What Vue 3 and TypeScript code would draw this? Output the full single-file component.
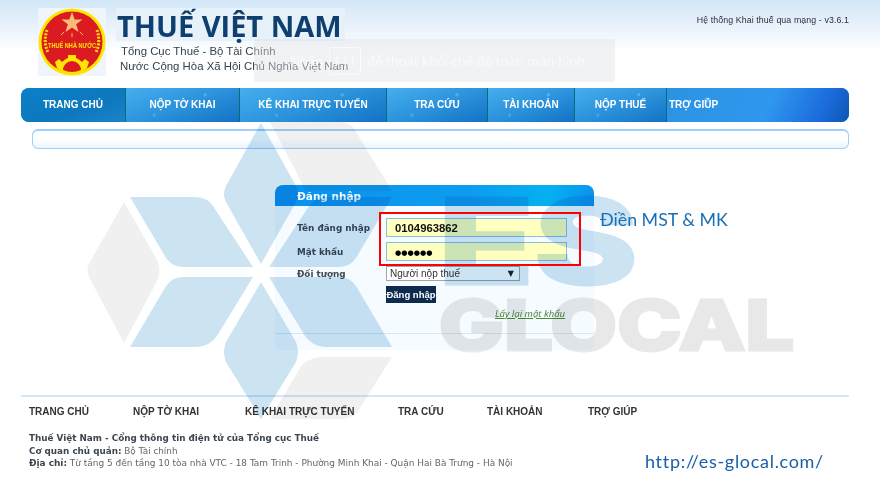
<template>
  <div class="page">
    <header class="top">
      <div class="brand">
        <div class="emblem">
          <svg width="68" height="68" viewBox="0 0 68 68">
            <circle cx="34" cy="34" r="33.5" fill="#ffe600" />
            <circle cx="34" cy="34" r="30.5" fill="#dc1a22" />
            <polygon
              points="34,4 36.7,11.5 44.5,11.5 38.2,16.3 40.5,24 34,19.4 27.5,24 29.8,16.3 23.5,11.5 31.3,11.5"
              fill="#f7bd78"
            />
            <path d="M34 25v4M26 24l-3 3M42 24l3 3" stroke="#f5c060" stroke-width="1" />
            <path
              d="M9 22 Q5 34 10 44"
              fill="none"
              stroke="#ffe600"
              stroke-width="3"
              stroke-dasharray="2 1.4"
            />
            <path
              d="M59 22 Q63 34 58 44"
              fill="none"
              stroke="#ffe600"
              stroke-width="3"
              stroke-dasharray="2 1.4"
            />
            <text x="34" y="40" class="emblem-text" textLength="48" lengthAdjust="spacingAndGlyphs">THUẾ NHÀ NƯỚC</text>
            <path
              d="M19 60 L17 54 L21 51 L24 54 Q27 51 30 50 L30 47 L38 47 L38 50 Q41 51 44 54 L47 51 L51 54 L49 60 Q42 66 34 66 Q26 66 19 60 Z"
              fill="#ffe600"
            />
            <path d="M25 62 A9 9 0 0 1 43 62 Q34 66 25 62 Z" fill="#dc1a22" />
          </svg>
        </div>
        <div class="brand-text">
          <h1>THUẾ VIỆT NAM</h1>
          <p class="sub1">Tổng Cục Thuế - Bộ Tài Chính</p>
          <p class="sub2">Nước Cộng Hòa Xã Hội Chủ Nghĩa Việt Nam</p>
        </div>
      </div>
      <div class="version">Hệ thống Khai thuế qua mạng - v3.6.1</div>
    </header>

    <nav class="menu">
      <a
        v-for="item in menu"
        :key="item.label"
        :style="{ width: item.w + 'px' }"
        :class="{ first: item.label === 'TRANG CHỦ' }"
      >{{ item.label }}</a>
      <a class="last">TRỢ GIÚP</a>
    </nav>
    <div class="notice"></div>

    <main class="login-wrap">
      <section class="login">
        <h2>Đăng nhập</h2>
        <div class="login-body">
          <div class="row r1">
            <label>Tên đăng nhập</label>
            <div class="field">0104963862</div>
          </div>
          <div class="row r2">
            <label>Mật khẩu</label>
            <div class="field dots">●●●●●●</div>
          </div>
          <div class="row r3">
            <label>Đối tượng</label>
            <div class="select">Người nộp thuế<span class="arrow">▼</span></div>
          </div>
          <button class="submit">Đăng nhập</button>
          <a class="forgot">Lấy lại mật khẩu</a>
          <div class="rule"></div>
        </div>
      </section>
    </main>

    <footer class="foot">
      <div class="foot-nav">
        <a v-for="f in footLinks" :key="f.label" :style="{ width: f.w + 'px' }">{{ f.label }}</a>
      </div>
      <p class="strong">Thuế Việt Nam - Cổng thông tin điện tử của Tổng cục Thuế</p>
      <p><b>Cơ quan chủ quản:</b> Bộ Tài chính</p>
      <p class="addr"><b>Địa chỉ:</b> Từ tầng 5 đến tầng 10 tòa nhà VTC - 18 Tam Trinh - Phường Minh Khai - Quận Hai Bà Trưng - Hà Nội</p>
    </footer>

    <!-- thanh bao F11 cua trinh duyet -->
    <div class="toast">
      <span>Nhấn</span><kbd>F11</kbd><span>để thoát khỏi chế độ toàn màn hình</span>
    </div>

    <!-- watermark phu len toan trang -->
    <svg class="mark" width="880" height="500" viewBox="0 0 880 500">
      <g fill="#cce3f2">
        <path d="M261 123 L226 186 Q222 194 226 202 L261 264 L296 202 Q300 194 296 186 Z" />
        <path d="M261 282 L226 342 Q222 352 226 362 L261 419 L296 362 Q300 352 296 342 Z" />
        <path d="M130 197 L197 197 Q208 198 213 206 L253 267 L184 267 Q172 267 166 258 Z" />
        <path d="M130 347 L197 347 Q210 346 217 336 L253 277 L184 277 Q172 277 166 286 Z" />
        <path d="M392 197 L325 197 Q314 198 309 206 L269 267 L338 267 Q350 267 356 258 Z" />
        <path d="M392 347 L325 347 Q312 346 305 336 L269 277 L338 277 Q350 277 356 286 Z" />
      </g>
      <g fill="#f0f0f0">
        <path d="M124 202 L90 262 Q85 270 90 279 L124 343 L156 283 Q163 270 156 258 Z" />
        <path d="M270 122 L340 122 Q350 122 355 130 L392 191 L306 191 Z" />
        <path d="M392 357 L322 357 Q306 358 300 368 L270 419 L340 419 Q352 419 358 411 Z" />
      </g>
      <text x="438" y="284" class="mark-es" textLength="200" lengthAdjust="spacingAndGlyphs">ES</text>
      <text x="439" y="350" class="mark-glocal" textLength="355" lengthAdjust="spacingAndGlyphs">GLOCAL</text>
    </svg>

    <div class="redbox"></div>
    <div class="note">Điền MST &amp; MK</div>
    <div class="url">http://es-glocal.com/</div>
  </div>
</template>

<script setup lang="ts">
const menu = [
  { label: 'TRANG CHỦ', w: 105 },
  { label: 'NỘP TỜ KHAI', w: 114 },
  { label: 'KÊ KHAI TRỰC TUYẾN', w: 147 },
  { label: 'TRA CỨU', w: 101 },
  { label: 'TÀI KHOẢN', w: 87 },
  { label: 'NỘP THUẾ', w: 92 }
]

const footLinks = [
  { label: 'TRANG CHỦ', w: 104 },
  { label: 'NỘP TỜ KHAI', w: 112 },
  { label: 'KÊ KHAI TRỰC TUYẾN', w: 153 },
  { label: 'TRA CỨU', w: 89 },
  { label: 'TÀI KHOẢN', w: 101 },
  { label: 'TRỢ GIÚP', w: 60 }
]
</script>

<style>
html,
body {
  margin: 0;
  background: #fff;
}
</style>

<style scoped>
.page {
  position: relative;
  width: 880px;
  height: 500px;
  overflow: hidden;
  font-family: 'DejaVu Sans', sans-serif;
  background: linear-gradient(#d2e6f7 0, #fff 52px);
}
.top {
  height: 88px;
  display: flex;
  justify-content: space-between;
  padding: 8px 31px 0 38px;
  box-sizing: border-box;
}
.brand {
  display: flex;
  gap: 10px;
}
.emblem {
  width: 68px;
  height: 68px;
  background: #eef6fc;
}
.emblem svg {
  display: block;
}
.emblem-text {
  font-family: 'Liberation Sans', sans-serif;
  font-size: 7px;
  font-weight: 700;
  fill: #ffe600;
  text-anchor: middle;
}
.brand-text h1 {
  margin: 0;
  width: 229px;
  height: 33px;
  font-family: 'Open Sans', sans-serif;
  font-size: 29px;
  line-height: 35px;
  font-weight: 700;
  color: #0e3f6e;
  white-space: nowrap;
  background: #e6f1fa;
  text-indent: 1px;
}
.brand-text p {
  margin: 0;
  font-family: 'Liberation Sans', sans-serif;
  font-size: 11.4px;
  line-height: 15px;
  color: #33424f;
  white-space: nowrap;
}
.sub1 {
  padding: 3px 0 0 5px;
}
.sub2 {
  padding-left: 4px;
}
.version {
  font-family: 'Liberation Sans', sans-serif;
  font-size: 8.8px;
  line-height: 24px;
  letter-spacing: 0.1px;
  color: #2a3038;
}
.menu {
  margin: 0 31px 0 21px;
  height: 34px;
  display: flex;
  border-radius: 8px;
  overflow: hidden;
  background: linear-gradient(135deg, #3aa5ea, #1678c9);
}
.menu a {
  box-sizing: border-box;
  height: 34px;
  line-height: 34px;
  text-align: center;
  font-family: 'Liberation Sans', sans-serif;
  font-size: 10px;
  font-weight: 700;
  color: #fff;
  white-space: nowrap;
  border-right: 1px solid #0d6a7a;
  background:
    radial-gradient(circle at 70% 20%, rgba(255, 255, 255, 0.18) 0 1.5px, transparent 2px),
    radial-gradient(circle at 25% 80%, rgba(255, 255, 255, 0.14) 0 1.5px, transparent 2px),
    linear-gradient(160deg, #45aeee 0%, #2c93dc 50%, #1272c4 100%);
}
.menu a.first {
  background: linear-gradient(160deg, #0a80c8, #0d78bd 60%, #1a84c8);
}
.menu a.last {
  flex: 1;
  border-right: 0;
  text-align: left;
  padding-left: 2px;
  background:
    radial-gradient(circle at 22% 35%, rgba(255, 255, 255, 0.3) 0 2px, transparent 3px),
    linear-gradient(115deg, #2a93e2 0%, #2f98ee 55%, #1a6adc 85%, #0f55b0 100%);
}
.notice {
  margin: 7px 31px 0 32px;
  height: 20px;
  box-sizing: border-box;
  border: 1px solid #9ed0fb;
  border-top-width: 2px;
  border-radius: 6px;
  background: linear-gradient(#fff 45%, #eaf5ff);
}
.login-wrap {
  display: flex;
  padding: 36px 0 0 275px;
}
.login {
  width: 319px;
}
.login h2 {
  margin: 0;
  height: 21px;
  padding-left: 22px;
  font-size: 10.5px;
  line-height: 22px;
  font-weight: 700;
  color: #f2f9ff;
  border-radius: 8px 8px 0 0;
  background: linear-gradient(100deg, #0a92ee 0%, #0d9cf0 60%, #05b0f0 85%, #0a92ee 100%);
}
.login-body {
  height: 144px;
  padding: 12px 0 0 22px;
  box-sizing: border-box;
  background: #f5fbff;
  border-radius: 0 0 6px 6px;
}
.row {
  display: flex;
  align-items: center;
}
.row label {
  width: 89px;
  font-size: 8.8px;
  font-weight: 700;
  color: #3f4a55;
  white-space: nowrap;
}
.r2 {
  margin-top: 5px;
}
.r3 {
  margin-top: 5px;
}
.field {
  width: 181px;
  height: 19px;
  box-sizing: border-box;
  border: 1px solid #86bfe8;
  background: #ffffc0;
  padding-left: 8px;
  font-family: 'Liberation Sans', sans-serif;
  font-size: 11.3px;
  font-weight: 700;
  line-height: 19px;
  color: #111;
}
.dots {
  font-family: 'DejaVu Sans', sans-serif;
  font-size: 7.2px;
  color: #000;
}
.select {
  position: relative;
  width: 134px;
  height: 15px;
  box-sizing: border-box;
  border: 1px solid #a0a6ac;
  background: #fff;
  padding-left: 3px;
  font-family: 'Liberation Sans', sans-serif;
  font-size: 10px;
  line-height: 14px;
  color: #333;
}
.arrow {
  position: absolute;
  right: 5px;
  top: 0;
  font-family: 'DejaVu Sans', sans-serif;
  font-size: 8px;
  color: #222;
}
.submit {
  display: block;
  margin: 5px 0 0 89px;
  width: 50px;
  height: 17px;
  padding: 0;
  border: 0;
  background: #0d2a4f;
  color: #fff;
  font-family: 'Liberation Sans', sans-serif;
  font-size: 9.5px;
  font-weight: 700;
  white-space: nowrap;
}
.forgot {
  display: block;
  margin: 4px 0 0 198px;
  font-family: 'Noto Sans', sans-serif;
  font-size: 9.5px;
  line-height: 13px;
  font-style: italic;
  text-decoration: underline;
  color: #4a8a3a;
  white-space: nowrap;
}
.rule {
  margin: 13px 0 0 -22px;
  height: 1px;
  background: #d6e8f6;
}
.foot {
  margin: 45px 31px 0 21px;
  border-top: 2px solid #d3e8f9;
  padding: 9px 0 0 8px;
  font-size: 8.8px;
  color: #666;
}
.foot-nav {
  display: flex;
  height: 26px;
}
.foot-nav a {
  font-family: 'Liberation Sans', sans-serif;
  font-size: 10px;
  font-weight: 700;
  color: #333;
  white-space: nowrap;
}
.foot p {
  margin: 0;
  line-height: 12.5px;
  white-space: nowrap;
}
.foot .addr {
  font-size: 8.95px;
}
.foot b,
.foot .strong {
  font-weight: 700;
  color: #3c4650;
}
.toast {
  position: absolute;
  left: 254px;
  top: 39px;
  width: 361px;
  height: 43px;
  box-sizing: border-box;
  padding-left: 36px;
  display: flex;
  align-items: center;
  gap: 6px;
  background: rgba(225, 227, 230, 0.45);
  border-radius: 2px;
  font-family: 'Noto Sans', sans-serif;
  font-size: 13px;
  color: #fafafa;
  white-space: nowrap;
}
.toast kbd {
  width: 32px;
  height: 28px;
  box-sizing: border-box;
  border: 1px solid #fafafa;
  border-radius: 2px;
  font: inherit;
  line-height: 26px;
  text-align: center;
}
.mark {
  position: absolute;
  left: 0;
  top: 0;
  mix-blend-mode: multiply;
  pointer-events: none;
}
.mark-es {
  font-family: 'Inter', sans-serif;
  font-size: 118px;
  font-weight: 800;
  fill: #cce3f2;
  stroke: #cce3f2;
  stroke-width: 3px;
}
.mark-glocal {
  font-family: 'Inter', sans-serif;
  font-size: 69px;
  font-weight: 800;
  fill: #e8e8e8;
  stroke: #e8e8e8;
  stroke-width: 3px;
}
.redbox {
  position: absolute;
  left: 379px;
  top: 212px;
  width: 202px;
  height: 54px;
  box-sizing: border-box;
  border: 2.5px solid #f00;
}
.note {
  position: absolute;
  left: 600px;
  top: 207px;
  font-family: 'Lato', sans-serif;
  font-size: 17.8px;
  line-height: 24px;
  color: #1a6fb5;
  white-space: nowrap;
}
.url {
  position: absolute;
  left: 645px;
  top: 449px;
  font-family: 'Lato', sans-serif;
  font-size: 18px;
  line-height: 24px;
  letter-spacing: 0.7px;
  color: #1a5fa8;
  white-space: nowrap;
}
</style>
